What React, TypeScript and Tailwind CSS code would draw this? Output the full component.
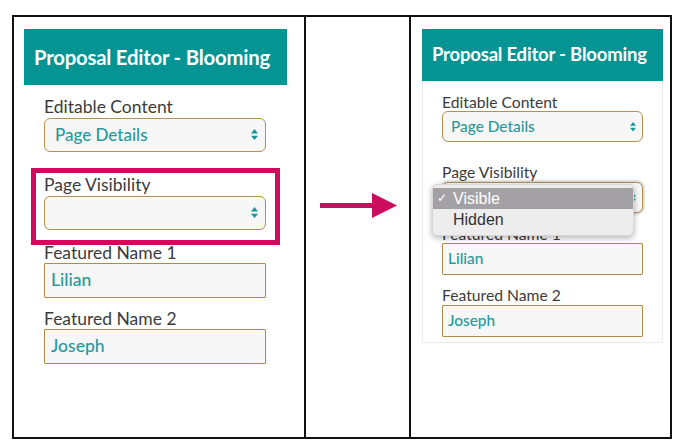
import React from "react";

const font = { fontFamily: "Lato, 'Open Sans', sans-serif" };

const Arrows: React.FC<{ size?: number }> = ({ size = 7 }) => (
  <svg width={size} height={size * 1.6} viewBox="0 0 7 11" className="shrink-0">
    <path d="M3.5 0 L7 4.3 L0 4.3 Z" fill="#17969a" />
    <path d="M3.5 11 L7 6.7 L0 6.7 Z" fill="#17969a" />
  </svg>
);

type Scale = "lg" | "sm";

const Label: React.FC<{ text: string; s: Scale }> = ({ text, s }) => (
  <div
    className={
      s === "lg"
        ? "text-[17.5px] leading-[20px] text-[#3b3b3b]"
        : "text-[15.7px] leading-[18px] text-[#3b3b3b]"
    }
  >
    {text}
  </div>
);

const Select: React.FC<{ value?: string; s: Scale; focused?: boolean }> = ({
  value,
  s,
  focused,
}) => (
  <div
    className={`flex items-center justify-between border border-[#b4924e] bg-[#f7f7f7] rounded-[6px] ${
      s === "lg" ? "h-[34px] pl-[10px] pr-[7px] mt-px" : "h-[31px] pl-[8px] pr-[6px]"
    } ${focused ? "shadow-[0_0_3px_1px_rgba(0,0,0,0.25)]" : ""}`}
  >
    <span
      className={`font-medium text-[#27999c] ${s === "lg" ? "text-[17px]" : "text-[15.4px]"}`}
    >
      {value}
    </span>
    <Arrows size={s === "lg" ? 7 : 6} />
  </div>
);

const Input: React.FC<{ value: string; s: Scale }> = ({ value, s }) => (
  <div
    className={`flex items-center border border-[#ad8d45] bg-[#f7f7f7] rounded-[1px] ${
      s === "lg" ? "h-[35px] pl-[6px] text-[17.5px]" : "h-[32px] pl-[5px] text-[15.4px]"
    }`}
  >
    <span className="font-medium text-[#27999c]">{value}</span>
  </div>
);

const Header: React.FC<{ s: Scale }> = ({ s }) => (
  <div
    className={`bg-[#049494] text-white font-bold flex items-center ${
      s === "lg"
        ? "h-[56px] pl-[10px] text-[20.3px] tracking-[-0.2px]"
        : "h-[52px] pl-[10px] text-[18.5px] tracking-[-0.2px]"
    }`}
  >
    Proposal Editor - Blooming
  </div>
);

const Before: React.FC = () => (
  <div className="pl-[10px] pt-[12px]">
    <div className="w-[263px]">
      <Header s="lg" />
      <div className="pl-[20px] w-[242px] pt-[12px] flex flex-col">
        <Label text="Editable Content" s="lg" />
        <Select value="Page Details" s="lg" />
        <div className="relative mt-[23px]">
          <Label text="Page Visibility" s="lg" />
          <Select s="lg" />
          <div className="absolute -left-[13px] -right-[14px] -top-[7px] -bottom-[15px] border-[5px] border-[#cc0c5d] pointer-events-none" />
        </div>
        <div className="mt-[13px]">
          <Label text="Featured Name 1" s="lg" />
          <Input value="Lilian" s="lg" />
        </div>
        <div className="mt-[11px]">
          <Label text="Featured Name 2" s="lg" />
          <Input value="Joseph" s="lg" />
        </div>
      </div>
    </div>
  </div>
);

const After: React.FC = () => (
  <div className="pl-[11px] pt-[12px]">
    <div className="w-[241px]">
      <Header s="sm" />
      <div className="border border-t-0 border-[#ececec] pl-[19px] pr-[19px] pt-[12px] pb-[5px] flex flex-col">
        <Label text="Editable Content" s="sm" />
        <Select value="Page Details" s="sm" />
        <div className="relative mt-[21px]">
          <Label text="Page Visibility" s="sm" />
          <div className="mt-px">
            <Select s="sm" focused />
          </div>
          <div className="absolute left-[-10px] top-[21px] w-[202px] rounded-[5px] bg-[#ededed] border border-[#d6d6d6] shadow-[0_2px_6px_rgba(0,0,0,0.3)] pt-[3px] pb-[5px] z-10 text-[16px] leading-[21px] font-['Liberation_Sans',_Arial,_sans-serif]">
            <div className="flex items-center bg-[#a3a1a6] text-white h-[21px]">
              <span className="w-[20px] pl-[4px] text-[12px]">✓</span>
              <span>Visible</span>
            </div>
            <div className="flex items-center text-[#333] h-[21px] pl-[20px]">Hidden</div>
          </div>
        </div>
        <div className="mt-[12px]">
          <Label text="Featured Name 1" s="sm" />
          <Input value="Lilian" s="sm" />
        </div>
        <div className="mt-[11px]">
          <Label text="Featured Name 2" s="sm" />
          <div className="mt-px">
            <Input value="Joseph" s="sm" />
          </div>
        </div>
      </div>
    </div>
  </div>
);

export default function App() {
  return (
    <div className="w-[685px] h-[448px] bg-white pt-[15px] pl-[12px]" style={font}>
      <div className="w-[660px] h-[424px] border-2 border-[#111] grid grid-cols-[290px_105px_1fr]">
        <Before />
        <div className="border-l-2 border-[#111] pt-[176px] pl-[14px]">
          <svg width="78" height="26" viewBox="0 0 78 26">
            <rect x="0" y="10" width="54" height="5" fill="#cc0c5d" />
            <path d="M52 0 L77 12.5 L52 25 Z" fill="#cc0c5d" />
          </svg>
        </div>
        <div className="border-l-2 border-[#111]">
          <After />
        </div>
      </div>
    </div>
  );
}
